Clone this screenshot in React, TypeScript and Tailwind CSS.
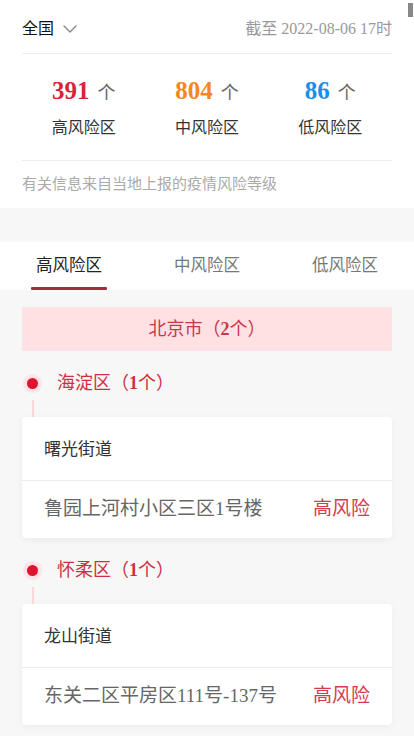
import { ChevronDown } from 'lucide-react';

const STATS = [
  { num: '391', label: '高风险区', color: 'text-[#d8233a]' },
  { num: '804', label: '中风险区', color: 'text-[#f5871f]' },
  { num: '86', label: '低风险区', color: 'text-[#1a8fe8]' },
];

const TABS = ['高风险区', '中风险区', '低风险区'];

const DISTRICTS = [
  { name: '海淀区', count: 1, street: '曙光街道', place: '鲁园上河村小区三区1号楼' },
  { name: '怀柔区', count: 1, street: '龙山街道', place: '东关二区平房区111号-137号' },
];

const FONT = "font-['Liberation_Serif','Noto_Sans_CJK_SC',serif]";

function District({ name, count, street, place }: (typeof DISTRICTS)[number]) {
  return (
    <div>
      <div className="flex items-center h-[34px]">
        <div className="w-[21px] flex justify-center">
          <span className="w-[19px] h-[19px] rounded-full bg-[#fde4e6] flex items-center justify-center">
            <span className="w-[11px] h-[11px] rounded-full bg-[#e0142d]" />
          </span>
        </div>
        <span className="text-[18px] text-[#cf2f45] ml-[14px]">
          {name}（<b className="font-bold">{count}</b>个）
        </span>
      </div>
      <div className="w-[21px] flex justify-center h-[17px]">
        <div className="w-[2px] h-full bg-[#fbd7da]" />
      </div>
      <div className="bg-white rounded-[4px] shadow-[0_2px_8px_rgba(0,0,0,0.05)]">
        <div className="h-[64px] flex items-center px-[22px] pt-[2px] text-[17px] text-[#333] border-b border-[#ececec]">
          {street}
        </div>
        <div className="h-[57px] flex items-center justify-between px-[22px] text-[19px]">
          <span className="text-[#666]">{place}</span>
          <span className="text-[#d83b4d]">高风险</span>
        </div>
      </div>
    </div>
  );
}

export default function App() {
  return (
    <div className={`relative min-h-screen bg-[#f7f7f7] ${FONT}`}>
      <div className="absolute right-[1px] top-[3px] w-[5px] h-[14px] bg-[#888]" />

      <div className="bg-white px-[22px]">
        <div className="h-[54px] flex items-center justify-between border-b border-[#eeeeee] pt-[4px]">
          <div className="flex items-center text-[16px] text-[#111]">
            全国
            <ChevronDown className="w-[24px] h-[24px] ml-[4px] text-[#888]" strokeWidth={1.4} />
          </div>
          <span className="text-[16px] text-[#999]">截至 2022-08-06 17时</span>
        </div>
        <div className="grid grid-cols-3 h-[107px] border-b border-[#eeeeee] pt-[18px]">
          {STATS.map((s) => (
            <div key={s.label} className="flex flex-col items-center">
              <div className="flex items-baseline h-[32px]">
                <span className={`text-[25px] font-bold ${s.color}`}>{s.num}</span>
                <span className="text-[18px] text-[#666] ml-[8px]">个</span>
              </div>
              <span className="text-[16px] text-[#333] mt-[12px]">{s.label}</span>
            </div>
          ))}
        </div>
        <div className="h-[47px] flex items-center text-[15px] text-[#aaa]">有关信息来自当地上报的疫情风险等级</div>
      </div>

      <div className="h-[34px]" />

      <div className="bg-white grid grid-cols-3 h-[48px]">
        {TABS.map((t, i) => (
          <div key={t} className="relative flex items-center justify-center">
            <span className={`text-[16.5px] ${i === 0 ? 'text-[#222]' : 'text-[#777]'}`}>{t}</span>
            {i === 0 && <div className="absolute bottom-0 left-[31px] w-[76px] h-[3px] bg-[#a82b3c] rounded-[1px]" />}
          </div>
        ))}
      </div>

      <div className="px-[22px] pt-[17px] pb-[12px]">
        <div className="h-[44px] bg-[#ffe1e3] flex items-center justify-center text-[18px] text-[#c8374b]">
          北京市（<b className="font-bold">2</b>个）
        </div>
        <div className="mt-[15px] flex flex-col gap-[15px]">
          {DISTRICTS.map((d) => (
            <District key={d.name} {...d} />
          ))}
        </div>
      </div>
    </div>
  );
}
